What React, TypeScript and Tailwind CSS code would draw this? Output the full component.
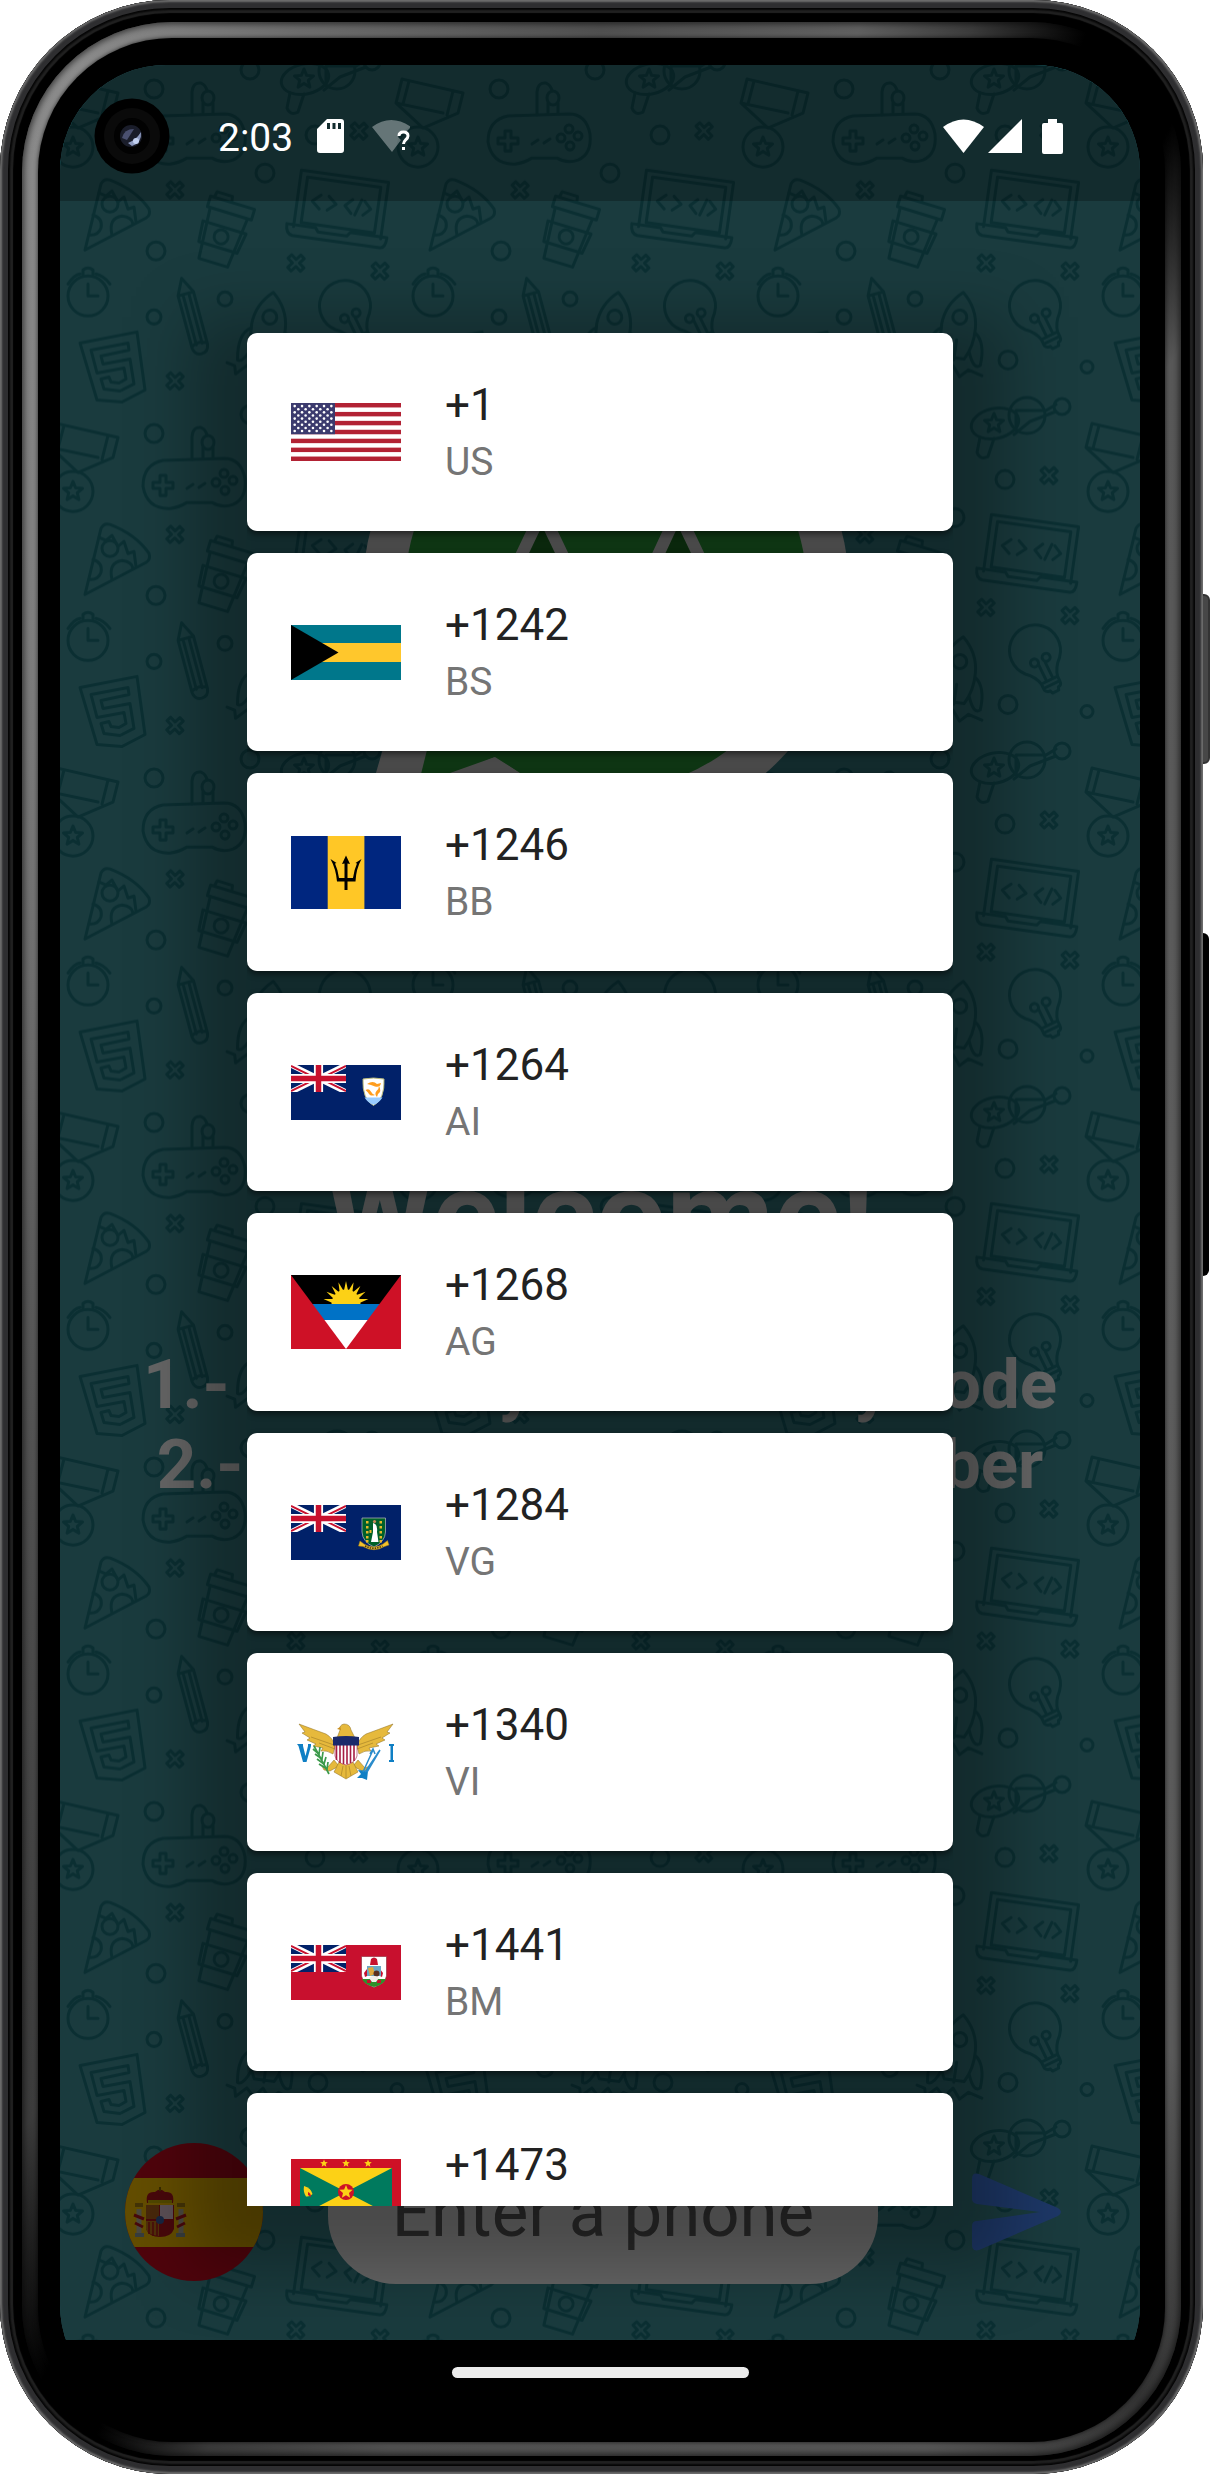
import React from "react";

const TILE_W = 345;
const TILE_H = 344.5;

function Cross({ x, y }: { x: number; y: number }) {
  return (
    <path
      transform={`translate(${x} ${y}) rotate(47)`}
      d="M-2.500 -9 H2.500 V-2.500 H9 V2.500 H2.500 V9 H-2.500 V2.500 H-9 V-2.500 H-2.500 Z"
    />
  );
}

function Star({ x, y, r }: { x: number; y: number; r: number }) {
  const pts = Array.from({ length: 10 }, (_, i) => {
    const a = (Math.PI / 5) * i - Math.PI / 2;
    const q = i % 2 ? r * 0.45 : r;
    return `${x + q * Math.cos(a)},${y + q * Math.sin(a)}`;
  }).join(" ");
  return <polygon points={pts} />;
}

/* One tile of the chat wallpaper */
function Doodles() {
  return (
    <g>
      {/* medal */}
      <path d="M57 79 L118 93 L113 113 L78 128 L51 103 Z M51 103 L98 113 M108 91 L102 115 M64 81 L58 104" />
      <circle cx="73" cy="147" r="20" />
      <Star x={73} y={147} r={10} />
      {/* gamepad */}
      <path d="M163 116 Q143 120 143 142 Q147 165 170 164 Q179 163 187 158 H212 Q222 164 233 160 Q247 154 245 134 Q241 114 224 114 Z" />
      <path d="M192 115 V92 Q193 82 201 83 Q206 85 207 91 M203 114 V103 M213 113 V103" />
      <ellipse cx="208" cy="98" rx="6" ry="7" />
      <path d="M160 131 H166 V138 H173 V144 H166 V151 H160 V144 H153 V138 H160 Z M187 144 L193 140 M199 143 L205 139" />
      <circle cx="224" cy="129" r="4" />
      <circle cx="233" cy="136" r="4" />
      <circle cx="216" cy="138" r="4" />
      <circle cx="225" cy="146" r="4" />
      {/* pizza */}
      <path d="M85 250 L101 184 Q104 178 110 180 Q136 190 149 209 Q151 215 146 218 Z" />
      <path d="M99 193 L106 196 L112 191 L118 202 L124 197 L128 209 L134 207 L136 222" />
      <circle cx="110" cy="204" r="8" />
      <path d="M93 215 Q103 218 101 228 Q98 236 89 235 M112 235 Q108 218 122 216 Q132 217 133 224" />
      {/* cup */}
      <g transform="translate(222 234) rotate(17)">
        <path d="M-18 -34 L-17 -39 H-1 L0 -34 M-22 -33 H24 V-22 H-22 Z M-19 -22 L-15 30 H15 L20 -22 M-22 -7 H23 L20 14 H-20 Z" />
        <circle r="7" cy="3" />
      </g>
      {/* laptop */}
      <g transform="translate(341 205) rotate(8)">
        <path d="M-44 28 V-29 H44 V28 M-37 23 V-23 H37 V23 Z M-51 26 H-22 L-19 30 H10 L13 26 H50 Q50 37 44 37 H-44 Q-51 36 -51 26 Z" />
        <path d="M-21 -7 L-29 0 L-21 7 M-13 -7 L-5 0 L-13 7 M11 -7 L4 0 L11 7 M15 8 L20 -8 M23 -7 L30 0 L23 7" />
      </g>
      {/* alarm clock */}
      <circle cx="88" cy="296" r="20" />
      <path d="M88 284 V296 H98 M83 275 V270 Q88 266 93 270 V275 M68 284 Q74 275 80 274 M96 274 Q104 276 110 284" />
      {/* pencil */}
      <g transform="translate(192 317) rotate(-15)">
        <path d="M0 -40 L-8 -24 V30 Q-7 38 0 38 Q7 38 8 30 V-24 Z M-8 -24 H8 M-3 -24 V28 M3 -24 V28 M-8 29 Q0 24 8 29" />
      </g>
      {/* rocket */}
      <g transform="translate(268 330) rotate(8)">
        <path d="M0 -38 Q-16 -24 -17 -4 Q-17 16 -10 28 H10 Q18 14 17 -4 Q16 -24 0 -38 Z M-17 0 Q-30 8 -26 34 Q-20 36 -14 20 M17 0 Q29 8 27 32 Q21 38 14 20 M0 10 V30" />
        <circle cy="-13" r="7" />
        <path d="M-36 38 L-28 40 L-26 48 L-16 38 L-8 46 L0 36 L8 46 L16 38 L30 42" />
      </g>
      {/* light bulb */}
      <g transform="translate(345 306) rotate(-26)">
        <path d="M-9 33 Q-11 24 -19 17 A25.500 25.500 0 1 1 19 17 Q11 24 9 33 Z M-9 33 V40 Q-8 43 -4 43 L-3 46 H4 L5 43 Q9 43 9 38 V33 M-9 38 H9" />
        <path d="M-3 32 V15 M4 32 V15" />
        <circle cx="-6" cy="11" r="4" />
        <circle cx="7" cy="11" r="4" />
      </g>
      {/* html5 shield */}
      <path d="M80 343 L137 332 L145 390 L122 402 L97 400 Z" />
      <path d="M91 350 L128 343 L129 350 L101 356 L103 364 L130 359 L134 384 L120 391 L104 389 L101 379 L109 377 L111 382 L119 383 L126 379 L124 368 L97 373 Z" />
      {/* rattle */}
      <ellipse cx="305" cy="79" rx="24" ry="15" transform="rotate(-12 305 79)" />
      <circle cx="337" cy="71" r="18" />
      <Star x={304} y={79} r={10} />
      <path d="M326 66 L356 66 L366 60 M324 90 L340 77 L366 67 M290 93 L287 108 Q290 116 298 112 L304 94 M326 66 V86" />
      <circle cx="372" cy="62" r="8" />
      <circle cx="154" cy="89" r="9" />
      <circle cx="156" cy="251" r="9" />
      <circle cx="265" cy="173" r="9" />
      <circle cx="225" cy="299" r="7" />
      <circle cx="154" cy="317" r="7" />
      <circle cx="250" cy="70" r="9" />
      <circle cx="315" cy="135" r="9" />
      <circle cx="318" cy="360" r="9" />
      <circle cx="397" cy="367" r="6" />
      <Cross x={175} y={190} />
      <Cross x={296} y={263} />
      <Cross x={380} y={271} />
      <Cross x={175} y={381} />
      <Cross x={359} y={131} />
    </g>
  );
}

function Wallpaper() {
  const copies = [
    [0, 0],
    [TILE_W, 0],
    [-TILE_W, 0],
    [0, TILE_H],
    [0, -TILE_H],
  ];
  return (
    <svg className="absolute inset-0 h-full w-full" aria-hidden="true">
      <defs>
        <pattern id="doodles" width={TILE_W} height={TILE_H} patternUnits="userSpaceOnUse">
          <g fill="none" stroke="#1c757e" strokeWidth="3" strokeLinejoin="round" strokeLinecap="round">
            {copies.map(([x, y]) => (
              <g key={`${x},${y}`} transform={`translate(${x - 60} ${y - 65})`}>
                <Doodles />
              </g>
            ))}
          </g>
        </pattern>
      </defs>
      <rect width="100%" height="100%" fill="#41939c" />
      <rect width="100%" height="100%" fill="url(#doodles)" />
    </svg>
  );
}

function UnionJack() {
  return (
    <svg width="55" height="27" viewBox="0 0 60 30" preserveAspectRatio="none">
      <rect width="60" height="30" fill="#012169" />
      <path d="M0 0 L60 30 M60 0 L0 30" stroke="#fff" strokeWidth="6" />
      <path d="M0 1 L26 14 M34 16 L60 29 M60 1 L34 14 M26 16 L0 29" stroke="#c8102e" strokeWidth="2" />
      <path d="M30 0 V30 M0 15 H60" stroke="#fff" strokeWidth="10" />
      <path d="M30 0 V30 M0 15 H60" stroke="#c8102e" strokeWidth="6" />
    </svg>
  );
}

function FlagUS() {
  const h = 58 / 13;
  return (
    <svg width="110" height="58" viewBox="0 0 110 58">
      <rect width="110" height="58" fill="#fff" />
      {Array.from({ length: 7 }, (_, i) => (
        <rect key={i} y={i * 2 * h} width="110" height={h} fill="#b22234" />
      ))}
      <rect width="44" height={h * 7} fill="#3c3b6e" />
      {Array.from({ length: 9 }, (_, r) =>
        Array.from({ length: r % 2 ? 5 : 6 }, (_, c) => (
          <circle key={`${r}-${c}`} cx={(r % 2 ? 7.3 : 3.7) + c * 7.33} cy={3.1 + r * 3.12} r="1.300" fill="#fff" />
        )),
      )}
    </svg>
  );
}

function FlagBS() {
  return (
    <svg width="110" height="55" viewBox="0 0 110 55">
      <rect width="110" height="55" fill="#00778b" />
      <rect y="18" width="110" height="19" fill="#ffc72c" />
      <path d="M0 0 L47.500 27.500 L0 55 Z" fill="#000" />
    </svg>
  );
}

function FlagBB() {
  return (
    <svg width="110" height="73" viewBox="0 0 110 73">
      <rect width="110" height="73" fill="#00267f" />
      <rect x="36.700" width="36.700" height="73" fill="#ffc726" />
      <path
        d="M55 19.500 L59 28 L56.500 27.500 V42 H62 Q63 34 66 27.500 L64.500 27 L70.500 23 Q65 33 64.500 45.500 H56.500 V54 H53.500 V45.500 H46 Q45 33 39.500 23 L45.500 27 L44 27.500 Q47 34 48 42 H53.500 V27.500 L51 28 Z"
        fill="#000"
      />
    </svg>
  );
}

function FlagAI() {
  return (
    <svg width="110" height="55" viewBox="0 0 110 55">
      <rect width="110" height="55" fill="#012169" />
      <UnionJack />
      <path d="M72 14 Q82.500 12 93 14 Q94 34 82.500 40.500 Q71 34 72 14 Z" fill="#fff" stroke="#b8b878" strokeWidth="1" />
      <path d="M73.500 32.500 H91.500 Q88 38 82.500 39.800 Q77 38 73.500 32.500 Z" fill="#9cf" />
      <g fill="#ff9d1e">
        <path d="M76 19 Q82 15 86 19 L90 18 Q89 23 84 21.500 Q80 19.500 76 19 Z" />
        <path d="M88 21 Q91 26 87 29 L86 32 Q83 29 85.500 26 Q88 24 88 21 Z" />
        <path d="M84 30 Q79 32 77 27.500 L74.500 25 Q78 23 79.500 26 Q81 29 84 30 Z" />
      </g>
    </svg>
  );
}

function FlagAG() {
  const rays = Array.from({ length: 9 }, (_, i) => {
    const a = Math.PI * (0.07 + (i * 0.86) / 8);
    const b = 0.12;
    const p = (t: number, r: number) => `${55 - r * Math.cos(t)},${29 - r * Math.sin(t)}`;
    return `${p(a - b * 1.4, 13)} ${p(a, 23)} ${p(a + b * 1.4, 13)}`;
  });
  return (
    <svg width="110" height="74" viewBox="0 0 110 74">
      <rect width="110" height="74" fill="#ce1126" />
      <clipPath id="ag-v">
        <path d="M0 0 H110 L55 74 Z" />
      </clipPath>
      <g clipPath="url(#ag-v)">
        <rect width="110" height="29" fill="#000" />
        <circle cx="55" cy="29" r="14.500" fill="#fcd116" />
        {rays.map((d) => (
          <polygon key={d} points={d} fill="#fcd116" />
        ))}
        <rect y="29" width="110" height="16" fill="#0072c6" />
        <rect y="45" width="110" height="29" fill="#fff" />
      </g>
    </svg>
  );
}

function FlagVG() {
  return (
    <svg width="110" height="55" viewBox="0 0 110 55">
      <rect width="110" height="55" fill="#012169" />
      <UnionJack />
      <path d="M71 13 H94.500 V27 Q94 37 83 42 Q71.500 37 71 27 Z" fill="#006129" stroke="#a9a9b5" strokeWidth="0.800" />
      <g fill="#e9b72a">
        {[16, 21, 26, 31, 35].map((y) => (
          <g key={y}>
            <rect x="75" y={y} width="2.500" height="2.500" />
            <rect x="88.500" y={y} width="2.500" height="2.500" />
          </g>
        ))}
        <rect x="78.500" y="25" width="2" height="3" />
      </g>
      <circle cx="83.500" cy="16.500" r="1.600" fill="#c48a5a" />
      <path d="M82 18 Q87 19 86 27 L87.500 37 H80 L82 27 Z" fill="#fff" />
      <path
        d="M69 36 L73 39 Q83 45 92 39 L96.500 35.500 L98 40 L93.500 41.500 Q83 48 72 41.500 L67.500 41 Z"
        fill="#f2c12e"
        stroke="#a77f14"
        strokeWidth="0.500"
      />
      <path d="M74 41 Q83 45.500 91.500 41" fill="none" stroke="#4a3a10" strokeWidth="1.600" strokeDasharray="1.500 1" />
    </svg>
  );
}

function FlagVI() {
  return (
    <svg width="110" height="73" viewBox="0 0 110 73">
      <rect width="110" height="73" fill="#fff" />
      <g fill="#e6b93c" stroke="#8a6a1c" strokeWidth="0.500">
        <path d="M8 8 Q24 14 35 18 Q42 22 44 30 L42 38 Q36 34 30 35 L32 32 L22 30 L25 28 L16 24 L19 22 L11 17 L14 16 Z" />
        <path d="M102 8 Q86 14 75 18 Q68 22 66 30 L68 38 Q74 34 80 35 L78 32 L88 30 L85 28 L94 24 L91 22 L99 17 L96 16 Z" />
        <path d="M49 14 Q48 9 53 8 Q59 8 60 14 L64 22 H46 Z" />
        <path d="M43 44 L36 52 L31 50 L33 54 L39 55 L48 50 Z" />
        <path d="M67 44 L74 52 L79 50 L77 54 L71 55 L62 50 Z" />
        <path d="M48 46 H62 L67 56 L60 60 L55 63 L50 60 L43 56 Z" />
      </g>
      <path d="M49 11 L46 13 L50 14 Z" fill="#c98d1b" />
      <path d="M20 21 L46 30 M90 21 L64 30 M28 27 L44 33 M82 27 L66 33 M52 50 L50 60 M55 50 V62 M58 50 L60 60" stroke="#a8842a" strokeWidth="0.700" />
      <path d="M44 28 H66 V40 Q64 47 55 49 Q46 47 44 40 Z" fill="#fff" stroke="#9b1c3c" strokeWidth="0.600" />
      <path d="M45.500 29 V44 M49 29 V47 M52.500 29 V48 M56 29 V48 M59.500 29 V47 M63 29 V45" stroke="#a51c43" strokeWidth="1.600" />
      <path d="M42 21 Q55 19 68 21 V29.500 H42 Z" fill="#1b2a6b" />
      <g fill="#0f7fc4">
        <path d="M6 28 H12 V30 L14.500 40 L17 30 V28 H20 V30 L15.500 46 H12 L7.500 30 Z" />
        <path d="M98 28 H103 V30 H102 V44 H103 V46 H98 V44 H99.500 V30 H98 Z" />
        <path d="M67 54 L77 55 L76 64 L71 62 L66 62 L70 58 Z" />
      </g>
      <path d="M72 56 L82 34 M74 56 L87 37 M76 56 L89 34 M79 38 L82 33 L84 38 M86 38 L89 34" fill="none" stroke="#2b8ccb" strokeWidth="1.500" />
      <g stroke="#3c9a4b" strokeWidth="1.700" fill="none">
        <path d="M23 30 L38 58" />
        <path d="M22 33 L28 38 L29 31 M24 38 L31 43 L32 36 M26 43 L33 48 L35 41 M28 48 L36 53 L37 46" />
      </g>
    </svg>
  );
}

function FlagBM() {
  return (
    <svg width="110" height="55" viewBox="0 0 110 55">
      <rect width="110" height="55" fill="#c8102e" />
      <UnionJack />
      <path d="M70.500 11.500 H95.500 V31 Q94 39 83 42.500 Q72 39 70.500 31 Z" fill="#fff" stroke="#8a2030" strokeWidth="0.600" />
      <path d="M71 34 H95 Q92 40 83 42 Q74 40 71 34 Z" fill="#2f8f2a" />
      <path d="M80 14 Q83 11 86 14 L87 20 H79 Z M73 28 L76 24 L78 30 L74 32 Z M92 28 L89 24 L87 30 L91 32 Z M76 35 H80 V38 H76 Z M86 35 H90 V38 H86 Z" fill="#c8102e" />
      <rect x="76" y="21" width="14" height="10" fill="#6aa7c4" />
      <path d="M77 23 L82 22 L84 29 L79 31 Z" fill="#e0a83c" />
      <circle cx="85.500" cy="28.500" r="3" fill="#5a3020" />
      <path d="M78 33 Q83 29 88 33 L85 37 H81 Z" fill="#f1efe9" />
    </svg>
  );
}

function FlagGD() {
  return (
    <svg width="110" height="66" viewBox="0 0 110 66">
      <rect width="110" height="66" fill="#ce1126" />
      <rect x="9" y="9" width="92" height="48" fill="#007a5e" />
      <path d="M9 9 H101 L9 57 H101 Z" fill="#fcd116" />
      <circle cx="55" cy="33" r="8" fill="#ce1126" />
      <g fill="#fcd116">
        <Star x={55} y={33} r={7} />
        {[33, 55, 77].map((x) => (
          <React.Fragment key={x}>
            <Star x={x} y={4.5} r={4} />
            <Star x={x} y={61.5} r={4} />
          </React.Fragment>
        ))}
        <path d="M13 27 Q20 29 21.500 35 Q19 38 15 37.500 Q12 33 13 27 Z" />
      </g>
      <path d="M17 33 Q20 34 20 38 L17 36 Z" fill="#ce1126" />
    </svg>
  );
}

function FlagES() {
  return (
    <svg viewBox="0 0 138 138" className="h-full w-full" aria-hidden="true">
      <rect width="138" height="138" fill="#c60b1e" />
      <rect y="35" width="138" height="69" fill="#f8c000" />
      <path d="M22 60 Q20 48 30 49 Q35 44 40 49 Q50 48 48 60 Z" fill="#b5161c" />
      <path d="M35 44 V48" stroke="#8a6a00" strokeWidth="2" />
      <rect x="23" y="57" width="24" height="3" fill="#c8b100" />
      <path d="M21 62 H49 V86 Q46 94 35 94 Q24 94 21 86 Z" fill="#b5161c" />
      <rect x="21" y="62" width="13" height="14" fill="#b4641c" />
      <rect x="35" y="62" width="13" height="14" fill="#e3c6d4" />
      <path d="M21 78 H34 V93 Q23 92 21 86 Z" fill="#c9781b" />
      <path d="M24 79 V91 M28 79 V93 M32 79 V93" stroke="#b5161c" strokeWidth="1.500" />
      <circle cx="35" cy="77" r="4" fill="#3a5ea0" />
      <path d="M14 66 V90 M56 66 V90" stroke="#b8b4a0" strokeWidth="5" />
      <path d="M10 92 H19 M51 92 H60" stroke="#8a9a9a" strokeWidth="4" />
      <path d="M10 62 H18 M52 62 H60" stroke="#a87f10" strokeWidth="4" />
      <path d="M9 72 L19 76 M10 80 L18 84 M61 72 L51 76 M60 80 L52 84" stroke="#b5161c" strokeWidth="3" />
    </svg>
  );
}

const COUNTRIES = [
  { dial: "+1", iso: "US", Flag: FlagUS },
  { dial: "+1242", iso: "BS", Flag: FlagBS },
  { dial: "+1246", iso: "BB", Flag: FlagBB },
  { dial: "+1264", iso: "AI", Flag: FlagAI },
  { dial: "+1268", iso: "AG", Flag: FlagAG },
  { dial: "+1284", iso: "VG", Flag: FlagVG },
  { dial: "+1340", iso: "VI", Flag: FlagVI },
  { dial: "+1441", iso: "BM", Flag: FlagBM },
  { dial: "+1473", iso: "GD", Flag: FlagGD },
];

function Logo() {
  return (
    <svg viewBox="350 345 500 500" className="size-[500px]" aria-hidden="true">
      <circle cx="606" cy="590" r="243" fill="#fff" />
      <path d="M400 690 L358 835 L510 800 Z" fill="#fff" />
      <circle cx="606" cy="590" r="201" fill="#33b944" />
      <path d="M432 730 L417 790 L495 757 L560 800 L600 740 Z" fill="#33b944" />
      <path d="M417 790 L450 773 L495 757 L520 773 L560 800 Z" fill="#fff" />
      <g fill="none" stroke="#fff" strokeWidth="12">
        <path d="M500 600 L542 512 L584 600 Z" fill="#268a2c" />
        <path d="M637 600 L678 512 L720 600 Z" fill="#268a2c" />
      </g>
    </svg>
  );
}

function WelcomeScreen() {
  return (
    <div className="absolute inset-0 flex flex-col items-center pt-[280px] pb-[56px]">
      <Wallpaper />
      <div className="relative">
        <Logo />
      </div>
      <h1 className="relative mt-[298px] text-[124px] leading-[145px] font-bold whitespace-nowrap text-white">Welcome!</h1>
      <p className="relative mt-[57px] text-center text-[69px] leading-[80px] font-bold whitespace-nowrap text-white">
        1.- Choose your country code
        <br />
        2.- Enter your phone number
      </p>
      <form className="relative mt-auto flex w-full items-center gap-[65px] px-[65px]" onSubmit={(e) => e.preventDefault()}>
        <button type="button" aria-label="Country: Spain" className="size-[138px] shrink-0 overflow-hidden rounded-full">
          <FlagES />
        </button>
        <input
          type="tel"
          aria-label="Phone number"
          placeholder="Enter a phone"
          className="h-[144px] min-w-0 flex-1 rounded-[68px] bg-white text-center text-[69px] text-black placeholder:text-[#666666]"
        />
        <button type="submit" aria-label="Send" className="flex w-[132px] shrink-0 justify-center">
          <svg viewBox="0 0 90 78" className="ml-4 h-[78px] w-[90px]" fill="#4a8bff">
            <path d="M7 1 L86 35 Q92 39 86 43 L7 77 Q0 79 0 72 V53 Q0 48 5 48 L68 39 L5 31 Q0 30 0 26 V6 Q0 -1 7 1 Z" />
          </svg>
        </button>
      </form>
    </div>
  );
}

function StatusBar() {
  return (
    <header className="relative flex h-[136px] shrink-0 items-center bg-black/25 pt-[6px] pr-[77px] pl-[34px] text-white">
      <svg viewBox="0 0 76 76" className="size-[76px]" aria-hidden="true">
        <circle cx="38" cy="38" r="37.500" fill="#000" />
        <circle cx="38" cy="38" r="28" fill="#0a0a0a" />
        <circle cx="38" cy="38" r="18" fill="#020202" />
        <circle cx="37" cy="38" r="11" fill="#1a1d2a" />
        <path d="M28 40 Q30 31 40 31 L33 42 Z" fill="#4a5070" />
        <path d="M47 34 Q48 45 38 48 L34 45 Q42 42 47 34 Z" fill="#8d9ac0" />
        <circle cx="42" cy="43" r="3" fill="#c2d0f0" />
      </svg>
      <time className="mt-1 ml-12 text-[39px] leading-[46px]">2:03</time>
      <svg viewBox="0 0 27 34" className="ml-6 h-[34px] w-[27px]" fill="#fff" aria-hidden="true">
        <path
          fillRule="evenodd"
          d="M10 0 H24 Q27 0 27 3 V31 Q27 34 24 34 H3 Q0 34 0 31 V10 Z M10 4 V10 H13 V4 Z M15.500 4 V10 H18.500 V4 Z M21 4 V10 H24 V4 Z"
        />
      </svg>
      <svg viewBox="0 0 38 34" className="ml-7 h-[34px] w-[38px]" aria-hidden="true">
        <path d="M0 8 Q19 -6 39 8 L35 12 Q28 11 26 18 L29 21 L20 33 Z" fill="#fff" fillOpacity="0.350" />
        <path d="M27 17 Q27 13 31.500 13 Q36 13 36 17 Q36 19 33.500 21 Q31.500 23 31.500 25" fill="none" stroke="#fff" strokeWidth="3" />
        <rect x="30" y="28" width="3" height="3" fill="#fff" />
      </svg>
      <div className="ml-auto flex items-center gap-1">
        <svg viewBox="0 0 41 34" className="h-[34px] w-[41px]" fill="#fff" aria-hidden="true">
          <path d="M0 8 Q20.500 -7 41 8 L20.500 34 Z" />
        </svg>
        <svg viewBox="0 0 34 34" className="size-[34px]" fill="#fff" aria-hidden="true">
          <path d="M34 0 V34 H0 Z" />
        </svg>
        <svg viewBox="0 0 21 35" className="ml-4 h-[35px] w-[21px]" fill="#fff" aria-hidden="true">
          <path d="M6 0 H15 V4 H19 Q21 4 21 6 V33 Q21 35 19 35 H2 Q0 35 0 33 V6 Q0 4 2 4 H6 Z" />
        </svg>
      </div>
    </header>
  );
}

function CountryDialog() {
  return (
    <div role="dialog" aria-label="Choose a country code" className="relative mx-[187px] mt-[132px] mb-[134px] flex min-h-0 flex-1 flex-col">
      <div className="absolute -inset-x-14 -top-4 -bottom-16 bg-black/28 blur-[32px]" />
      <ul className="relative flex min-h-0 flex-1 flex-col gap-[22px] overflow-hidden">
        {COUNTRIES.map(({ dial, iso, Flag }) => (
          <li key={iso} className="shrink-0">
            <button type="button" className="flex h-[198px] w-full items-center rounded-[10px] bg-white pl-11 text-left shadow-[0_3px_6px_rgba(0,0,0,0.5)]">
              <Flag />
              <span className="ml-11 flex flex-col gap-2">
                <span className="text-[44px] leading-[52px] text-[#222222]">{dial}</span>
                <span className="text-[39px] leading-[46px] text-[#757575]">{iso}</span>
              </span>
            </button>
          </li>
        ))}
      </ul>
    </div>
  );
}

export default function App() {
  return (
    <div className="h-screen w-full bg-white pr-2 font-['Roboto',sans-serif]">
      <div className="relative h-full">
        <div className="absolute top-[594px] -right-[7px] h-[170px] w-4 rounded-r-[6px] border-2 border-[#333333] bg-[#474747]" />
        <div className="absolute top-[933px] -right-[6px] h-[343px] w-4 rounded-r-[6px] bg-black" />
        <div className="relative h-full rounded-[170px] bg-black px-[22px] pt-[22px] pb-[18px] shadow-[inset_0_0_2px_2px_#6e6e6e,inset_0_0_0_8px_#2e2e30,inset_0_0_2px_10px_#050505,inset_0_0_1px_13px_#222222,inset_0_0_0_15px_#000000]">
          <div className="h-full rounded-[150px] bg-[conic-gradient(from_0deg,#505050_0deg,#606060_12deg,#3c3c3c_17deg,#000000_22deg,#000000_27deg,#585858_33deg,#5e5e5e_90deg,#5a5a5a_145deg,#333333_155deg,#555555_165deg,#505050_190deg,#3a3a3a_198deg,#000000_203deg,#000000_206deg,#3c3c3c_213deg,#484848_230deg,#5c5c5c_270deg,#7c7c7c_315deg,#8c8c8c_336deg,#6c6c6c_346deg,#505050_360deg)] px-4 pt-4 pb-[14px] shadow-[inset_0_0_6px_2px_rgba(0,0,0,0.6)]">
            <div className="h-full rounded-[134px] bg-black pt-[27px] pr-[25px] pb-[31px] pl-[22px] shadow-[0_0_4px_rgba(0,0,0,0.7)]">
              <div className="flex h-full flex-col overflow-hidden rounded-[106px] bg-black">
                <main className="relative flex min-h-0 flex-1 flex-col">
                  <WelcomeScreen />
                  <div className="absolute inset-0 bg-black/60" />
                  <StatusBar />
                  <CountryDialog />
                </main>
                <div className="flex h-[71px] shrink-0 items-start justify-center bg-black pt-[27px]">
                  <div className="h-[11px] w-[297px] rounded-full bg-[#ececec]" />
                </div>
              </div>
            </div>
          </div>
        </div>
      </div>
    </div>
  );
}
